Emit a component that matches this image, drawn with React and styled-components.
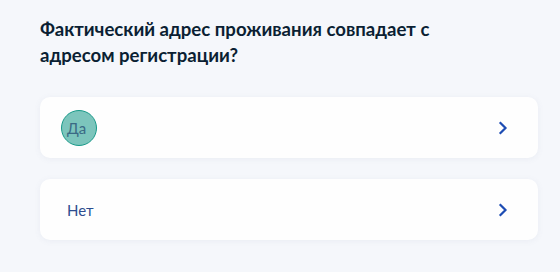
import React from 'react';
import styled, { createGlobalStyle } from 'styled-components';

const GlobalStyle = createGlobalStyle`
    html, body {
        margin: 0;
        padding: 0;
        background: #f5f7fb;
    }
    body {
        font-family: Lato, 'Noto Sans', sans-serif;
    }
`;

const Page = styled.div`
    width: 560px;
    height: 272px;
    box-sizing: border-box;
    padding: 16px 22px 0 40px;
    display: flex;
    flex-direction: column;
`;

const Title = styled.h2`
    margin: 0 0 29px 0;
    font-size: 18.6px;
    line-height: 26px;
    font-weight: 700;
    color: #0b1f33;
    max-width: 440px;
`;

const Options = styled.div`
    display: flex;
    flex-direction: column;
    gap: 21px;
`;

const Option = styled.button`
    display: flex;
    align-items: center;
    justify-content: space-between;
    height: 61px;
    box-sizing: border-box;
    padding: 0 30px 0 26px;
    border: none;
    border-radius: 10px;
    background: #fefefe;
    box-shadow: 0 1px 6px rgba(102, 119, 153, 0.08);
    font-family: inherit;
    cursor: pointer;
    text-align: left;
`;

const Label = styled.span`
    position: relative;
    font-size: 15px;
    color: ${props => props.focused ? '#3a6a85' : '#2d4d8f'};
    padding-left: 1px;
    &::before {
        content: '';
        display: ${props => props.focused ? 'block' : 'none'};
        position: absolute;
        left: -5px;
        top: 50%;
        width: 34px;
        height: 34px;
        margin-top: -18px;
        border-radius: 50%;
        background: #7cc5bc;
        border: 1px solid #189a89;
        z-index: 0;
    }
`;

const LabelText = styled.span`
    position: relative;
    z-index: 1;
`;

const Chevron = () => (
    <svg width="10" height="14" viewBox="0 0 10 14" fill="none">
        <path d="M2.5 2 L7.5 7 L2.5 12" stroke="#1d4cb3" strokeWidth="2.2" strokeLinecap="square" />
    </svg>
);

const options = [
    { label: 'Да', focused: true },
    { label: 'Нет', focused: false },
];

const App = () => (
    <>
        <GlobalStyle />
        <Page>
            <Title>Фактический адрес проживания совпадает с адресом регистрации?</Title>
            <Options>
                {options.map(o => (
                    <Option key={ o.label }>
                        <Label focused={ o.focused }>
                            <LabelText>{ o.label }</LabelText>
                        </Label>
                        <Chevron />
                    </Option>
                ))}
            </Options>
        </Page>
    </>
);

export default App;
